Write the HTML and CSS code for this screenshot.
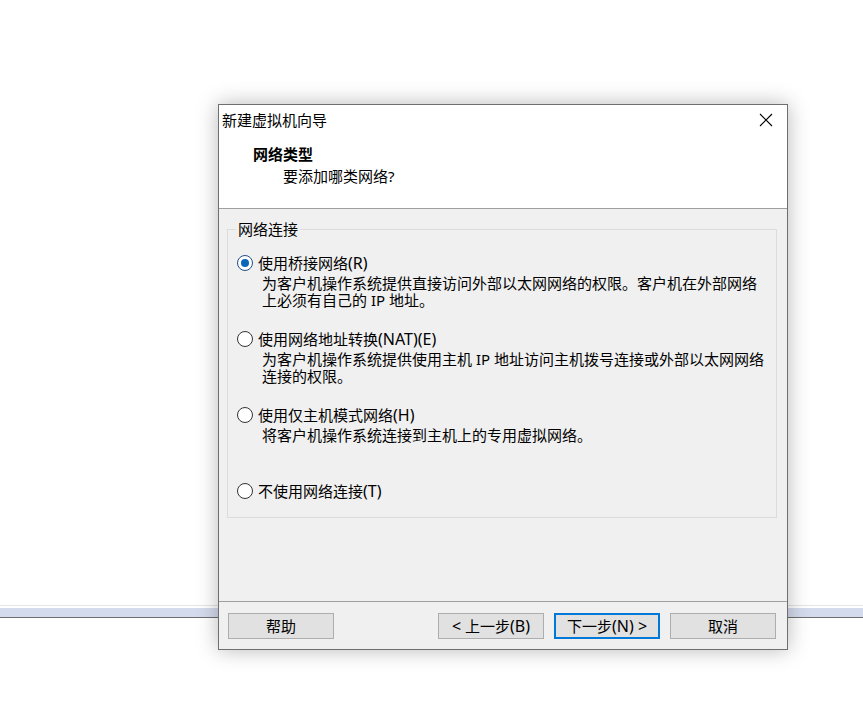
FILE: index.html
```html
<!DOCTYPE html>
<html lang="zh-CN">
<head>
<meta charset="utf-8">
<title>新建虚拟机向导</title>
<link rel="stylesheet" href="styles.css">
</head>
<body>
<div class="desktop">
  <div class="strip"></div>
</div>

<div class="dialog">
  <div class="header">
    <div class="titlebar">
      <span class="title">新建虚拟机向导</span>
      <svg class="close" width="14" height="14" viewBox="0 0 14 14"><path d="M1 1 L13 13 M13 1 L1 13" stroke="#000" stroke-width="1.1" fill="none"/></svg>
    </div>
    <div class="heading">网络类型</div>
    <div class="subheading">要添加哪类网络?</div>
  </div>

  <div class="body">
    <div class="group">
      <span class="legend">网络连接</span>
      <div class="opt">
        <div class="opt-head"><span class="radio checked"></span><span>使用桥接网络<span class="lat">(R)</span></span></div>
        <div class="opt-desc">为客户机操作系统提供直接访问外部以太网网络的权限。客户机在外部网络<br>上必须有自己的 IP 地址。</div>
      </div>
      <div class="opt">
        <div class="opt-head"><span class="radio"></span><span>使用网络地址转换<span class="lat">(NAT)(E)</span></span></div>
        <div class="opt-desc">为客户机操作系统提供使用主机 IP 地址访问主机拨号连接或外部以太网网络<br>连接的权限。</div>
      </div>
      <div class="opt">
        <div class="opt-head"><span class="radio"></span><span>使用仅主机模式网络<span class="lat">(H)</span></span></div>
        <div class="opt-desc">将客户机操作系统连接到主机上的专用虚拟网络。</div>
      </div>
      <div class="opt last">
        <div class="opt-head"><span class="radio"></span><span>不使用网络连接<span class="lat">(T)</span></span></div>
      </div>
    </div>
  </div>

  <div class="footer">
    <button class="btn">帮助</button>
    <div class="spacer"></div>
    <button class="btn"><span class="lat">&lt;</span> 上一步<span class="lat">(B)</span></button>
    <button class="btn default">下一步<span class="lat">(N) &gt;</span></button>
    <button class="btn">取消</button>
  </div>
</div>
</body>
</html>
```
FILE: styles.css
```css
html, body {
  margin: 0;
  padding: 0;
  background: #ffffff;
}
body {
  width: 863px;
  height: 713px;
  overflow: hidden;
  font-family: "Noto Sans", "Noto Sans CJK SC", sans-serif;
  font-size: 15px;
  color: #000;
}
.lat {
  font-size: 16px;
}
.desktop {
  padding-top: 605px;
}
.strip {
  height: 9px;
  border-top: 1px solid #e4e4e4;
  border-bottom: 1px solid #6e6e6e;
  background: linear-gradient(#ffffff 0, #ffffff 2px, #d4dbec 2px);
  padding-top: 2px;
  box-sizing: content-box;
}
.dialog {
  position: absolute;
  left: 218px;
  top: 104px;
  width: 570px;
  height: 546px;
  box-sizing: border-box;
  border: 1px solid #6f6f6f;
  background: #f0f0f0;
  box-shadow: 0 0 20px rgba(0, 0, 0, 0.28);
  display: flex;
  flex-direction: column;
}
.header {
  height: 103px;
  background: #ffffff;
  border-bottom: 1px solid #a0a0a0;
  flex: none;
}
.titlebar {
  height: 30px;
  display: flex;
  align-items: center;
  justify-content: space-between;
  padding-left: 3px;
  padding-right: 14px;
}
.title {
  line-height: 30px;
}
.close {
  display: block;
}
.heading {
  margin-top: 8px;
  margin-left: 34px;
  line-height: 22px;
  font-weight: bold;
}
.subheading {
  margin-left: 64px;
  line-height: 22px;
}
.body {
  height: 392px;
  flex: none;
  padding: 20px 10px 0 8px;
  box-sizing: border-box;
}
.group {
  position: relative;
  border: 1px solid #dcdcdc;
  padding: 23px 9px 16px 9px;
}
.legend {
  position: absolute;
  top: -10px;
  left: 8px;
  padding: 0 2px;
  background: #f0f0f0;
  line-height: 19px;
}
.opt {
  height: 76px;
}
.opt.last {
  height: 20px;
}
.opt-head {
  display: flex;
  align-items: center;
  height: 20px;
  gap: 5px;
  white-space: nowrap;
}
.radio {
  width: 16px;
  height: 16px;
  box-sizing: border-box;
  border: 1px solid #333333;
  border-radius: 50%;
  background: #ffffff;
  flex: none;
  display: flex;
  align-items: center;
  justify-content: center;
}
.radio.checked {
  border-color: #1f4e86;
}
.radio.checked::after {
  content: "";
  width: 8px;
  height: 8px;
  border-radius: 50%;
  background: #0a66b8;
}
.opt-desc {
  margin-top: 2px;
  padding-left: 25px;
  line-height: 17px;
  white-space: nowrap;
}
.footer {
  flex: none;
  height: 48px;
  box-sizing: border-box;
  border-top: 1px solid #a0a0a0;
  padding: 11px 11px 10px 9px;
  display: flex;
  gap: 10px;
}
.spacer {
  flex: 1;
}
.btn {
  width: 106px;
  height: 26px;
  box-sizing: border-box;
  border: 1px solid #adadad;
  background: #e1e1e1;
  font-family: "Noto Sans", "Noto Sans CJK SC", sans-serif;
  font-size: 15px;
  color: #000;
  padding: 0;
  margin: 0;
  line-height: 22px;
}
.btn.default {
  border: 2px solid #0078d7;
}
```
